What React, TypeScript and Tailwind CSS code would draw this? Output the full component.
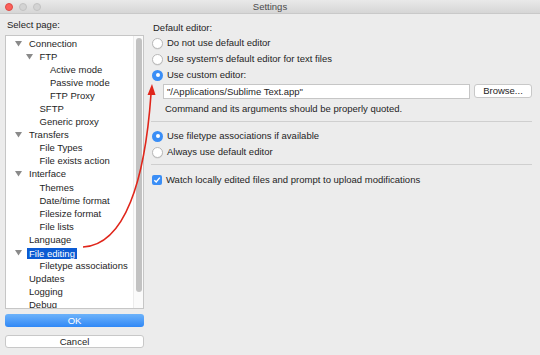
import React from 'react';

type Node = { label: string; level: 0 | 1 | 2; open?: boolean; selected?: boolean };

const tree: Node[] = [
  { label: 'Connection', level: 0, open: true },
  { label: 'FTP', level: 1, open: true },
  { label: 'Active mode', level: 2 },
  { label: 'Passive mode', level: 2 },
  { label: 'FTP Proxy', level: 2 },
  { label: 'SFTP', level: 1 },
  { label: 'Generic proxy', level: 1 },
  { label: 'Transfers', level: 0, open: true },
  { label: 'File Types', level: 1 },
  { label: 'File exists action', level: 1 },
  { label: 'Interface', level: 0, open: true },
  { label: 'Themes', level: 1 },
  { label: 'Date/time format', level: 1 },
  { label: 'Filesize format', level: 1 },
  { label: 'File lists', level: 1 },
  { label: 'Language', level: 0 },
  { label: 'File editing', level: 0, open: true, selected: true },
  { label: 'Filetype associations', level: 1 },
  { label: 'Updates', level: 0 },
  { label: 'Logging', level: 0 },
  { label: 'Debug', level: 0 },
];

const indent = ['pl-[7px]', 'pl-[17.5px]', 'pl-[28px]'];

function Disclosure() {
  return (
    <svg width="7" height="6" viewBox="0 0 7 6" className="ml-[2px]">
      <polygon points="0,0 7,0 3.5,5.5" fill="#8a8a8a" />
    </svg>
  );
}

function Radio({ checked }: { checked?: boolean }) {
  return checked ? (
    <span className="w-[11px] h-[11px] rounded-full bg-[#3a8ef6] flex items-center justify-center shrink-0">
      <span className="w-[4px] h-[4px] rounded-full bg-white" />
    </span>
  ) : (
    <span className="w-[11px] h-[11px] rounded-full bg-white border border-[#b9b9b9] shadow-[0_0.5px_0.5px_rgba(0,0,0,0.1)] shrink-0" />
  );
}

function RadioRow({ label, checked }: { label: string; checked?: boolean }) {
  return (
    <div className="h-[16px] flex items-center gap-[4px] pl-[1px]">
      <Radio checked={checked} />
      <span>{label}</span>
    </div>
  );
}

export default function App() {
  return (
    <div
      className="relative w-[540px] h-[355px] bg-[#ececec] text-[#1e1e1e] text-[9.5px] leading-[12px] overflow-hidden flex flex-col"
      style={{ fontFamily: '"Liberation Sans", Arial, sans-serif' }}
    >
      {/* title bar */}
      <div className="h-[14px] shrink-0 flex items-center border-b border-[#c9c9c9] bg-gradient-to-b from-[#e9e9e9] to-[#d6d6d6]">
        <div className="flex items-center gap-[5px] pl-[5px] w-[60px]">
          <span className="w-[8px] h-[8px] rounded-full bg-[#fc605b] border border-[#de4a44]" />
          <span className="w-[8px] h-[8px] rounded-full bg-[#d3d3d3] border border-[#c2c2c2] ml-[1px]" />
          <span className="w-[8px] h-[8px] rounded-full bg-[#d3d3d3] border border-[#c2c2c2] ml-[1px]" />
        </div>
        <div className="flex-1 text-center text-[#4a4a4a] pr-[60px]">Settings</div>
      </div>

      <div className="flex flex-1">
        {/* left column */}
        <div className="w-[139px] ml-[5px] flex flex-col">
          <div className="pt-[5px] pl-[2px] h-[21px]">Select page:</div>
          <div className="h-[274px] bg-white border border-[#c6c6c6] flex overflow-hidden">
            <div className="flex-1 min-w-0 pt-[1px]">
              {tree.map((n) => (
                <div key={n.label} className={`h-[13.1px] flex items-center whitespace-nowrap ${indent[n.level]}`}>
                  <span className="w-[16px] shrink-0 flex items-center">{n.open && <Disclosure />}</span>
                  {n.selected ? (
                    <span className="bg-[#0b5bd3] text-white px-[2px] -ml-[2px] leading-[11px]">{n.label}</span>
                  ) : (
                    <span>{n.label}</span>
                  )}
                </div>
              ))}
            </div>
            <div className="w-[10px] shrink-0 bg-[#fafafa] border-l border-[#ececec] pt-[2px] flex justify-center">
              <div className="w-[6px] h-[254px] rounded-full bg-[#c2c2c2]" />
            </div>
          </div>
          <button className="mt-[5px] h-[13px] rounded-[3px] bg-gradient-to-b from-[#6cb2fa] to-[#2f88f6] text-white text-[9.5px] leading-[13px]">
            OK
          </button>
          <button className="mt-[8px] h-[13px] rounded-[3px] bg-white border border-[#c8c8c8] text-[9.5px] leading-[11px]">
            Cancel
          </button>
        </div>

        {/* right column */}
        <div className="ml-[7px] w-[381px] pt-[8px] flex flex-col">
          <div className="h-[13px] pl-[2px]">Default editor:</div>
          <RadioRow label="Do not use default editor" />
          <RadioRow label="Use system's default editor for text files" />
          <RadioRow label="Use custom editor:" checked />
          <div className="mt-[1px] ml-[12px] flex gap-[4px]">
            <div className="w-[307px] h-[15px] bg-white border border-[#c6c6c6] pl-[3px] leading-[13px]">
              "/Applications/Sublime Text.app"
            </div>
            <button className="w-[58px] h-[14px] bg-white border border-[#c8c8c8] rounded-[3px] leading-[12px] text-[9.5px]">
              Browse...
            </button>
          </div>
          <div className="mt-[4px] ml-[14px]">Command and its arguments should be properly quoted.</div>
          <div className="mt-[6px] h-px bg-[#cfcfcf]" />
          <div className="mt-[6px]">
            <RadioRow label="Use filetype associations if available" checked />
            <RadioRow label="Always use default editor" />
          </div>
          <div className="mt-[4px] h-px bg-[#cfcfcf]" />
          <div className="mt-[7px] h-[16px] flex items-center gap-[4px] pl-[1px]">
            <span className="w-[10px] h-[10px] rounded-[2px] bg-[#3a8ef6] flex items-center justify-center">
              <svg width="8" height="8" viewBox="0 0 8 8">
                <path d="M1.3 4.2 L3.2 6 L6.8 1.6" stroke="white" strokeWidth="1.4" fill="none" />
              </svg>
            </span>
            <span>Watch locally edited files and prompt to upload modifications</span>
          </div>
        </div>
      </div>

      {/* red annotation arrow */}
      <svg className="absolute inset-0 pointer-events-none" width="540" height="355" viewBox="0 0 540 355">
        <path d="M83 247 C125 245, 145 180, 151 94" stroke="#e0261b" strokeWidth="1.6" fill="none" />
        <polygon points="152,84 147.5,95 155.5,95" fill="#e0261b" />
      </svg>
    </div>
  );
}
